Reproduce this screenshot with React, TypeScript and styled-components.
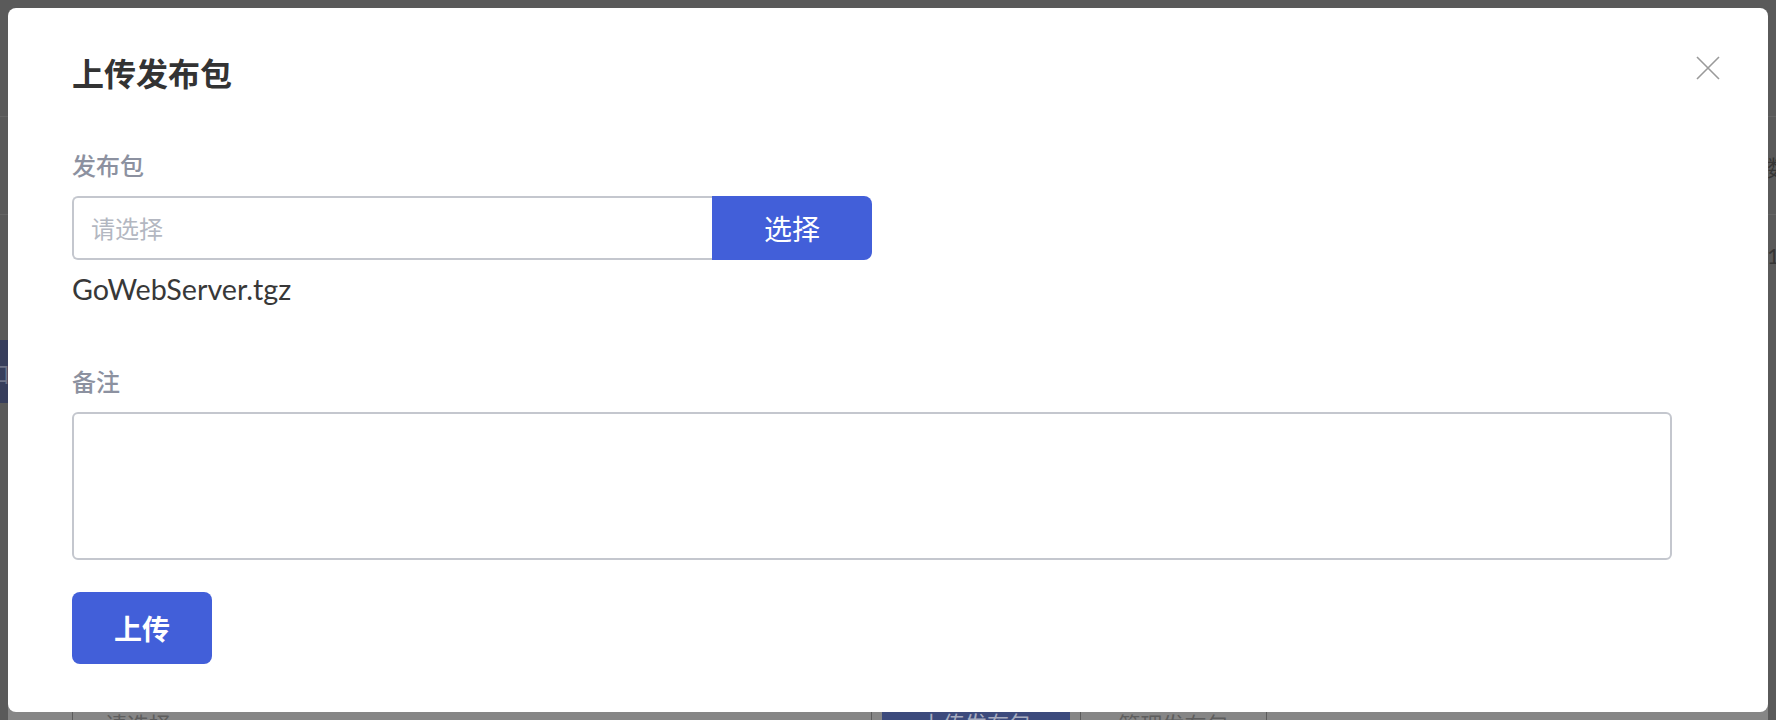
import React from 'react';
import styled, { createGlobalStyle } from 'styled-components';

const GlobalStyle = createGlobalStyle`
  html, body {
    margin: 0;
    padding: 0;
  }
  body {
    font-family: Lato, "Noto Sans CJK SC", sans-serif;
    background: #5a5a5a;
  }
  * {
    box-sizing: border-box;
  }
`;

const Screen = styled.div`
  position: relative;
  width: 1776px;
  height: 720px;
  overflow: hidden;
  background: #5a5a5a;
`;

// the dimmed page that sits behind the dialog
const BehindPage = styled.div`
  display: flex;
  flex-direction: column;
  height: 100%;
`;

const PageHeader = styled.div`
  flex-shrink: 0;
  height: 117px;
  border-bottom: 1px solid #656565;
`;

const PageRow = styled.div<{ $height: number; $line?: boolean }>`
  flex-shrink: 0;
  display: flex;
  align-items: center;
  height: ${p => p.$height}px;
  padding-left: 1767px;
  border-bottom: ${p => (p.$line ? '1px solid #656565' : 'none')};
  font-size: 22px;
  color: #353535;
  white-space: nowrap;
`;

const SideItem = styled.div`
  flex-shrink: 0;
  display: flex;
  align-items: center;
  width: 200px;
  height: 63px;
  margin-top: 45px;
  text-indent: -12px;
  background: #373e5c;
  color: #6f7488;
  font-size: 22px;
`;

const GhostPanel = styled.div`
  flex-shrink: 0;
  display: flex;
  align-items: flex-start;
  gap: 10px;
  height: 18px;
  margin: auto 8px 0;
  padding-left: 64px;
  overflow: hidden;
  background: #868686;
`;

const GhostInput = styled.div`
  width: 800px;
  height: 40px;
  padding: 11px 0 0 32px;
  border: 1px solid #5c5c5c;
  font-size: 22px;
  line-height: 22px;
  color: #5e5e5e;
`;

const GhostButton = styled.div<{ $primary?: boolean }>`
  width: ${p => (p.$primary ? 188 : 187)}px;
  height: 40px;
  padding-top: 11px;
  text-align: center;
  font-size: 22px;
  line-height: 22px;
  background: ${p => (p.$primary ? '#3c4a7c' : 'transparent')};
  color: ${p => (p.$primary ? '#a7acc0' : '#5e5e5e')};
  border: ${p => (p.$primary ? 'none' : '1px solid #5c5c5c')};
`;

const Overlay = styled.div`
  position: absolute;
  inset: 0;
  padding: 8px 8px 0;
`;

const Dialog = styled.div`
  position: relative;
  display: flex;
  flex-direction: column;
  align-items: flex-start;
  height: 704px;
  padding: 50px 64px 0;
  background: #ffffff;
  border-radius: 8px;
`;

const Title = styled.h2`
  margin: 0;
  font-size: 32px;
  line-height: 32px;
  font-weight: 600;
  color: #333333;
`;

const CloseButton = styled.button`
  position: absolute;
  top: 48px;
  right: 48px;
  width: 24px;
  height: 24px;
  padding: 0;
  border: none;
  background: none;
  cursor: pointer;

  svg {
    display: block;
  }
`;

const Label = styled.label<{ $gap: number }>`
  display: block;
  margin-top: ${p => p.$gap}px;
  font-size: 24px;
  line-height: 24px;
  font-weight: 500;
  color: #8c91a0;
`;

const InputGroup = styled.div`
  display: flex;
  width: 800px;
  height: 64px;
  margin-top: 18px;
`;

const FileInput = styled.input`
  flex: 0 0 640px;
  height: 100%;
  padding: 0 17px;
  border: 2px solid #c4c7ce;
  border-right: none;
  border-radius: 6px 0 0 6px;
  font-family: inherit;
  font-size: 24px;
  color: #333;
  outline: none;

  &::placeholder {
    color: #b3b7c1;
  }
`;

const PickButton = styled.button`
  flex: 0 0 160px;
  height: 100%;
  border: none;
  border-radius: 0 8px 8px 0;
  background: #425fd9;
  color: #ffffff;
  font-family: inherit;
  font-size: 28px;
  cursor: pointer;
`;

const FileName = styled.div`
  margin-top: 15px;
  font-size: 28.7px;
  line-height: 28px;
  color: #383838;
`;

const NoteArea = styled.textarea`
  width: 1600px;
  height: 148px;
  margin-top: 18px;
  padding: 12px 17px;
  border: 2px solid #c4c7ce;
  border-radius: 6px;
  font-family: inherit;
  font-size: 24px;
  resize: none;
  outline: none;
`;

const SubmitButton = styled.button`
  width: 140px;
  height: 72px;
  margin-top: 32px;
  border: none;
  border-radius: 8px;
  background: #425fd9;
  color: #ffffff;
  font-family: inherit;
  font-size: 28px;
  font-weight: 600;
  cursor: pointer;
`;

const CloseIcon = () => (
  <svg width="24" height="24" viewBox="0 0 24 24" fill="none">
    <path d="M1 1L23 23M23 1L1 23" stroke="#9a9a9a" strokeWidth="1.6" />
  </svg>
);

const App: React.FC = () => {
  return (
    <>
      <GlobalStyle />
      <Screen>
        <BehindPage>
          <PageHeader />
          <PageRow $height={98} $line>数据</PageRow>
          <PageRow $height={80}>1</PageRow>
          <SideItem>口</SideItem>
          <GhostPanel>
            <GhostInput>请选择</GhostInput>
            <GhostButton $primary>上传发布包</GhostButton>
            <GhostButton>管理发布包</GhostButton>
          </GhostPanel>
        </BehindPage>

        <Overlay>
          <Dialog>
            <Title>上传发布包</Title>
            <CloseButton aria-label="关闭">
              <CloseIcon />
            </CloseButton>

            <Label $gap={64}>发布包</Label>
            <InputGroup>
              <FileInput readOnly placeholder="请选择" />
              <PickButton>选择</PickButton>
            </InputGroup>
            <FileName>GoWebServer.tgz</FileName>

            <Label $gap={67}>备注</Label>
            <NoteArea />

            <SubmitButton>上传</SubmitButton>
          </Dialog>
        </Overlay>
      </Screen>
    </>
  );
};

export default App;
